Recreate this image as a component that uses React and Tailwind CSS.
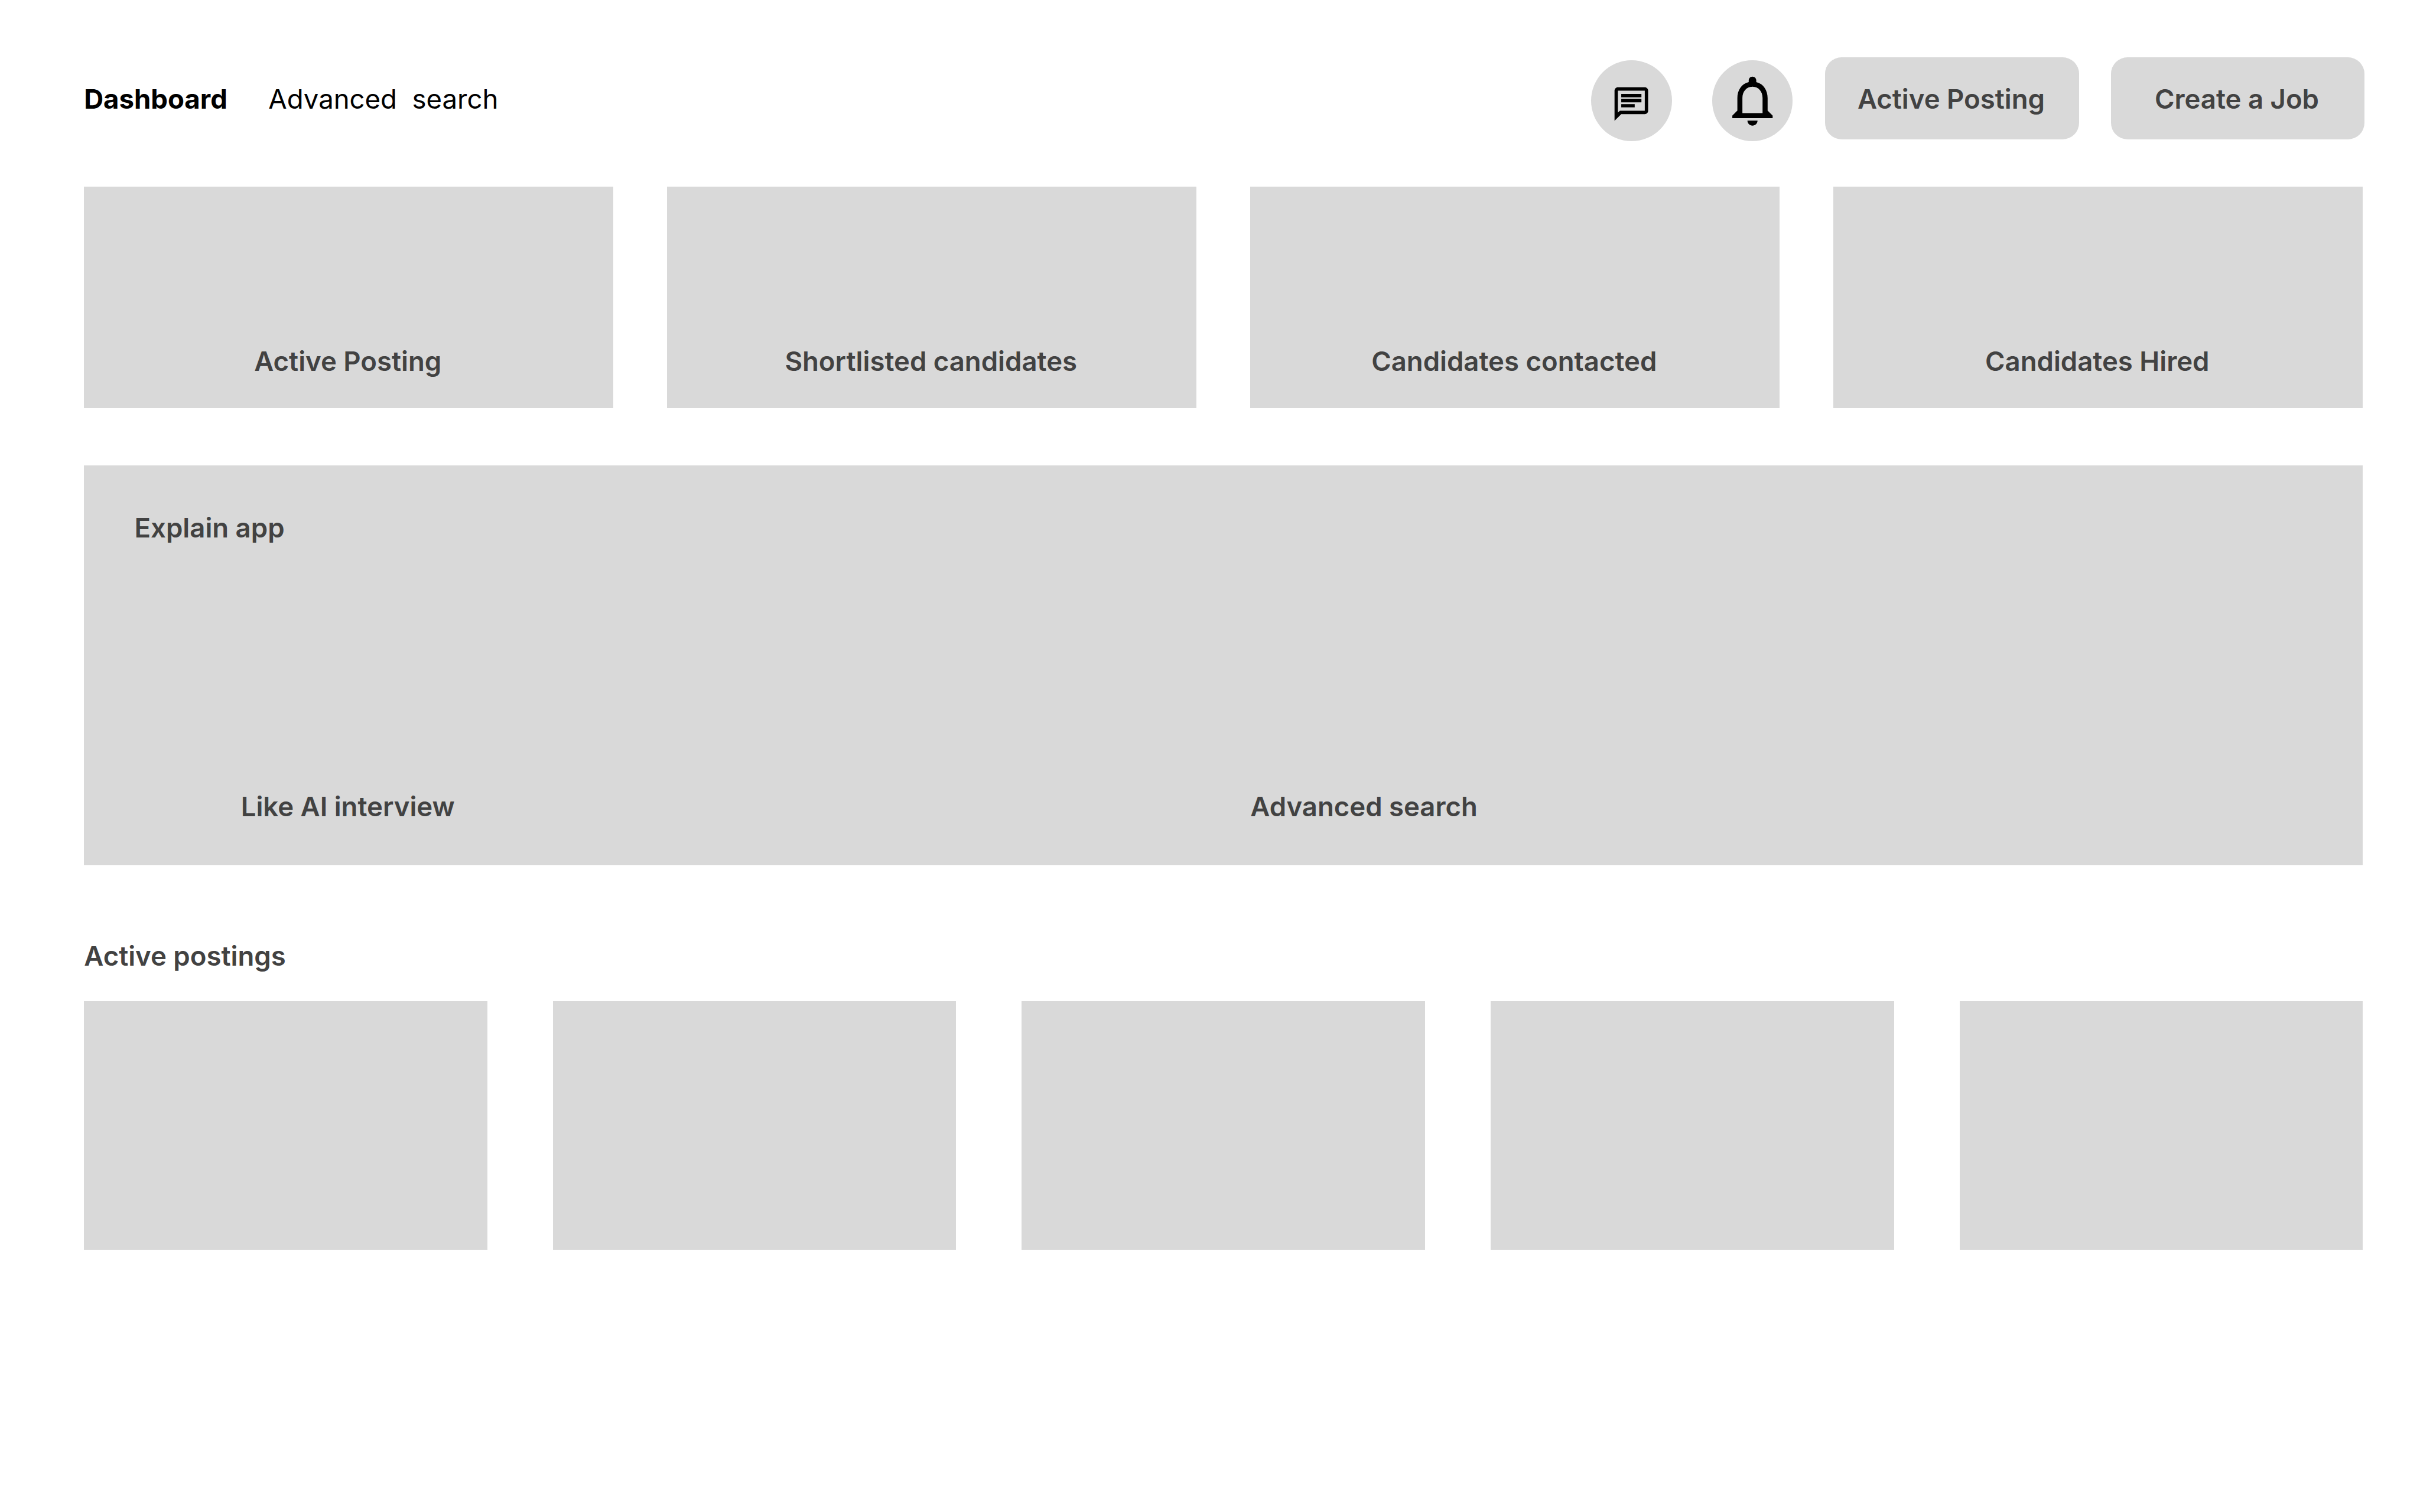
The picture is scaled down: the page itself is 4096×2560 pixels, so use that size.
const statCards = ["Active Posting", "Shortlisted candidates", "Candidates contacted", "Candidates Hired"];

function ChatIcon() {
  return (
    <svg viewBox="0 0 24 24" className="block w-[68.27px] h-[68.27px] mt-[11.4px]" fill="#000">
      <path d="M20 2H4c-1.1 0-2 .9-2 2v18l4-4h14c1.1 0 2-.9 2-2V4c0-1.1-.9-2-2-2zm0 14H5.17L4 17.17V4h16v12zM6 12h8v2H6zm0-3h12v2H6zm0-3h12v2H6z" />
    </svg>
  );
}

function BellIcon() {
  return (
    <svg viewBox="0 0 24 24" className="block w-[102.4px] h-[102.4px]" fill="#000">
      <path d="M12 22c1.1 0 2-.9 2-2h-4c0 1.1.89 2 2 2zm6-6v-5c0-3.07-1.64-5.64-4.5-6.32V4c0-.83-.67-1.5-1.5-1.5s-1.5.67-1.5 1.5v.68C7.63 5.36 6 7.92 6 11v5l-2 2v1h16v-1l-2-2zm-2 1H8v-6c0-2.48 1.51-4.5 4-4.5s4 2.02 4 4.5v6z" />
    </svg>
  );
}

function Circle({ children }) {
  return (
    <div className="flex items-center justify-center w-[136.5px] h-[136.5px] mt-[5.7px] rounded-full bg-[#d9d9d9]">
      {children}
    </div>
  );
}

function ActionButton({ children }) {
  return (
    <div className="flex items-center justify-center w-[429.5px] h-[139.4px] pt-[4px] pr-[3px] rounded-[28px] bg-[#d9d9d9] font-semibold text-[#424242]">
      {children}
    </div>
  );
}

export default function App() {
  return (
    <div className="w-[4096px] h-[2560px] bg-white font-['Inter',sans-serif] text-[45.51px] leading-[54px]">
      <header className="flex justify-between h-[315.73px] pt-[96.7px] pl-[142.2px] pr-[93.8px]">
        <nav className="flex pt-[44.6px] text-black">
          <span className="font-bold">Dashboard</span>
          <span className="ml-[69.5px] font-normal whitespace-pre">Advanced  search</span>
        </nav>
        <div className="flex items-start">
          <Circle><ChatIcon /></Circle>
          <div className="ml-[68.4px]"><Circle><BellIcon /></Circle></div>
          <div className="ml-[54.8px]"><ActionButton>Active Posting</ActionButton></div>
          <div className="ml-[54px]"><ActionButton>Create a Job</ActionButton></div>
        </div>
      </header>

      <main className="w-[3857.07px] ml-[142.22px] font-semibold text-[#424242]">
        <section className="grid grid-cols-[repeat(4,896px)] gap-x-[91.02px]">
          {statCards.map((label) => (
            <div key={label} className="h-[375.47px] pt-[269.4px] pr-[3px] bg-[#d9d9d9] text-center">
              {label}
            </div>
          ))}
        </section>

        <section className="h-[677px] mt-[96.7px] pt-[79px] bg-[#d9d9d9]">
          <div className="pl-[85.33px]">Explain app</div>
          <div className="grid grid-cols-[repeat(4,896px)] gap-x-[91.02px] mt-[418px]">
            <div className="pr-[3px] text-center">Like AI interview</div>
            <div />
            <div>Advanced search</div>
          </div>
        </section>

        <h2 className="mt-[127.1px] font-semibold">Active postings</h2>

        <section className="flex justify-between mt-[49.3px]">
          {[0, 1, 2, 3, 4].map((i) => (
            <div key={i} className="w-[682.67px] h-[421px] bg-[#d9d9d9]" />
          ))}
        </section>
      </main>
    </div>
  );
}
